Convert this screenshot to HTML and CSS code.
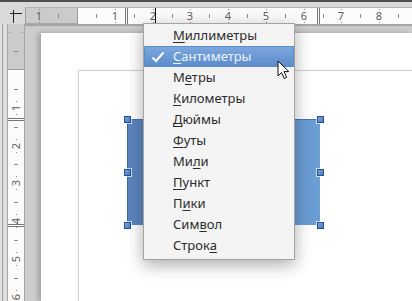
FILE: index.html
```html
<!DOCTYPE html>
<html lang="ru">
<head>
<meta charset="utf-8">
<link rel="stylesheet" href="styles.css">
</head>
<body>
<div class="topline"></div>
<div class="topgap"></div>
<div class="rulerrow">
  <div class="corner">
    <svg width="25" height="17" viewBox="0 0 25 17"><path d="M10 6.5H22M13.5 3V16" stroke="#222" stroke-width="1" fill="none"/></svg>
  </div>
  <div class="hruler">
    <div class="hgray"></div>
    <span class="hnum" style="left:14px">1</span>
    <span class="htick" style="left:33px"></span>
    <span class="htick" style="left:71px"></span>
    <span class="hnum" style="left:90px">1</span>
    <span class="hdouble" style="left:100px"></span>
    <span class="htick" style="left:109px"></span>
    <span class="hnum" style="left:128px">2</span>
    <span class="hpos" style="left:130px"></span>
    <span class="htick" style="left:147px"></span>
    <span class="hnum" style="left:165px">3</span>
    <span class="htick" style="left:184px"></span>
    <span class="hnum" style="left:203px">4</span>
    <span class="htick" style="left:222px"></span>
    <span class="hnum" style="left:241px">5</span>
    <span class="htick" style="left:260px"></span>
    <span class="hnum" style="left:279px">6</span>
    <span class="hdouble" style="left:292px"></span>
    <span class="htick" style="left:298px"></span>
    <span class="hnum" style="left:316px">7</span>
    <span class="htick" style="left:335px"></span>
    <span class="hnum" style="left:354px">8</span>
    <span class="htick" style="left:373px"></span>
  </div>
</div>
<div class="main">
  <div class="edge"></div>
  <div class="vruler">
    <div class="vgray"></div>
    <span class="vmark" style="top:8px"></span>
    <span class="vtick" style="top:27px"></span>
    <span class="vnum" style="top:84px">1</span>
    <span class="vdouble" style="top:94px"></span>
    <span class="vtick" style="top:65px"></span>
    <span class="vtick" style="top:103px"></span>
    <span class="vnum" style="top:122px">2</span>
    <span class="vtick" style="top:140px"></span>
    <span class="vnum" style="top:159px">3</span>
    <span class="vtick" style="top:178px"></span>
    <span class="vnum" style="top:197px">4</span>
    <span class="vdouble" style="top:200px"></span>
    <span class="vtick" style="top:216px"></span>
    <span class="vnum" style="top:235px">5</span>
    <span class="vtick" style="top:254px"></span>
    <span class="vnum" style="top:273px">6</span>
  </div>
  <div class="canvas">
    <div class="page">
      <div class="marginbox"></div>
      <div class="shape"></div>
      <span class="handle" style="left:83px;top:83px"></span>
      <span class="handle" style="left:276px;top:83px"></span>
      <span class="handle" style="left:83px;top:136px"></span>
      <span class="handle" style="left:276px;top:136px"></span>
      <span class="handle" style="left:83px;top:189px"></span>
      <span class="handle" style="left:276px;top:189px"></span>
    </div>
  </div>
</div>

<div class="menu">
  <div class="item"><u>М</u>иллиметры</div>
  <div class="item active">
    <svg class="check" width="14" height="12" viewBox="0 0 14 12"><path d="M1.5 6.5L5 10L12.5 1.5" stroke="#fff" stroke-width="2" fill="none"/></svg>
    <u>С</u>антиметры
  </div>
  <div class="item">М<u>е</u>тры</div>
  <div class="item"><u>К</u>илометры</div>
  <div class="item"><u>Д</u>юймы</div>
  <div class="item"><u>Ф</u>уты</div>
  <div class="item">Ми<u>л</u>и</div>
  <div class="item"><u>П</u>ункт</div>
  <div class="item">П<u>и</u>ки</div>
  <div class="item">Сим<u>в</u>ол</div>
  <div class="item">Строк<u>а</u></div>
</div>

<svg class="cursor" width="13" height="20" viewBox="0 0 13 20">
  <path d="M1 1V16L4.5 12.5L7.2 18.5L9.6 17.4L7 11.6H11.8Z" fill="#fff" stroke="#111" stroke-width="1" stroke-linejoin="round"/>
</svg>
</body>
</html>
```

FILE: styles.css
```css
html, body {
  margin: 0;
  padding: 0;
}
body {
  width: 412px;
  height: 301px;
  overflow: hidden;
  position: relative;
  background: #cdcdcd;
  font-family: "Noto Sans", "Open Sans", sans-serif;
}
.topline {
  height: 2px;
  background: #4d4d4d;
}
.topgap {
  height: 5px;
  background: #d9d9d9;
}
.rulerrow {
  display: flex;
  height: 17px;
  background: #d9d9d9;
}
.corner {
  width: 25px;
  height: 17px;
}
.corner svg {
  display: block;
}
.hruler {
  flex: 1;
  position: relative;
  background: #fbfbfb;
  border-top: 1px solid #b3b3b3;
  height: 16px;
  overflow: hidden;
}
.hgray {
  position: absolute;
  left: 0;
  top: 0;
  width: 51px;
  height: 15px;
  background: #cbcbcb;
  border-left: 1px solid #9e9e9e;
  border-right: 1px solid #9e9e9e;
  border-bottom: 1px solid #a8a8a8;
}
.hnum {
  position: absolute;
  top: 0;
  width: 12px;
  margin-left: -6px;
  text-align: center;
  font-size: 11px;
  line-height: 16px;
  color: #5e5e5e;
}
.hnum::before, .hnum::after {
  content: "";
  position: absolute;
  left: 5.5px;
  width: 1px;
  height: 1px;
  background: #8a8a8a;
}
.hnum::before { top: 1px; }
.hnum::after { bottom: 1px; }
.htick {
  position: absolute;
  top: 6px;
  width: 1px;
  height: 4px;
  background: #8a8a8a;
}
.hdouble {
  position: absolute;
  top: 0;
  width: 1px;
  height: 16px;
  border-left: 1px solid #777;
  border-right: 1px solid #777;
}
.hpos {
  position: absolute;
  top: 0;
  width: 1px;
  height: 17px;
  background: #111;
}
.main {
  display: flex;
  height: 277px;
}
.edge {
  width: 7px;
  background: linear-gradient(to right, #e2e2e2 0, #e2e2e2 2px, #9a9a9a 2px, #9a9a9a 3px, #dedede 3px);
}
.vruler {
  width: 16px;
  position: relative;
  background: #fbfbfb;
  border-left: 1px solid #a8a8a8;
  border-right: 1px solid #a8a8a8;
  overflow: hidden;
}
.vgray {
  height: 45px;
  background: #cbcbcb;
  border-bottom: 1px solid #9e9e9e;
}
.vnum {
  position: absolute;
  left: 0;
  width: 16px;
  height: 12px;
  margin-top: -6px;
  text-align: center;
  font-size: 11px;
  line-height: 12px;
  color: #5e5e5e;
  transform: rotate(-90deg);
}
.vnum::before, .vnum::after {
  content: "";
  position: absolute;
  top: 5.5px;
  width: 1px;
  height: 1px;
  background: #8a8a8a;
}
.vnum::before { left: 1px; }
.vnum::after { right: 1px; }
.vmark {
  position: absolute;
  left: 1px;
  width: 14px;
  height: 1px;
  background: linear-gradient(to right, #8a8a8a 1px, transparent 1px, transparent 13px, #8a8a8a 13px);
}
.vtick {
  position: absolute;
  left: 6px;
  width: 4px;
  height: 1px;
  background: #8a8a8a;
}
.vdouble {
  position: absolute;
  left: 0;
  width: 16px;
  height: 1px;
  border-top: 1px solid #777;
  border-bottom: 1px solid #777;
}
.canvas {
  flex: 1;
  padding: 9px 0 0 16px;
  background: #cdcdcd;
  box-shadow: inset 0 3px 1px -1px #a5a5a5;
  overflow: hidden;
}
.page {
  position: relative;
  height: 268px;
  background: #ffffff;
  box-shadow: -3px 0 5px rgba(0, 0, 0, 0.22);
}
.marginbox {
  position: absolute;
  left: 37px;
  top: 37px;
  right: 0;
  bottom: 0;
  border-left: 1px solid #d0d0d0;
  border-top: 1px solid #d0d0d0;
}
.shape {
  position: absolute;
  left: 86px;
  top: 86px;
  width: 192px;
  height: 105px;
  background: linear-gradient(to right, #5a84be, #6c9ed6);
  border-left: 1px solid #3f67a6;
  border-top: 1px solid #4a72b0;
}
.handle {
  position: absolute;
  width: 5px;
  height: 5px;
  background: linear-gradient(135deg, #7da4d8, #4d7bbd);
  border: 1px solid #224f96;
  box-shadow: 0 0 0 1px rgba(255, 255, 255, 0.7);
}
.menu {
  position: absolute;
  left: 143px;
  top: 23px;
  width: 150px;
  padding: 1px 0 3px;
  background: #f4f4f4;
  border: 1px solid #a3a3a3;
  box-shadow: 0 5px 16px rgba(0, 0, 0, 0.33);
}
.item {
  position: relative;
  height: 21px;
  line-height: 21px;
  padding-left: 29px;
  font-size: 13px;
  color: #2b2b2b;
  white-space: nowrap;
}
.item u {
  text-decoration: underline;
  text-underline-offset: 2px;
  text-decoration-thickness: 1px;
}
.item.active {
  background: linear-gradient(to bottom, #7ea8de, #5a8bcc);
  color: #eef3fb;
  box-shadow: inset 0 0 0 1px #5d8ccb;
}
.check {
  position: absolute;
  left: 7px;
  top: 5px;
}
.cursor {
  position: absolute;
  left: 277px;
  top: 60px;
}
```
